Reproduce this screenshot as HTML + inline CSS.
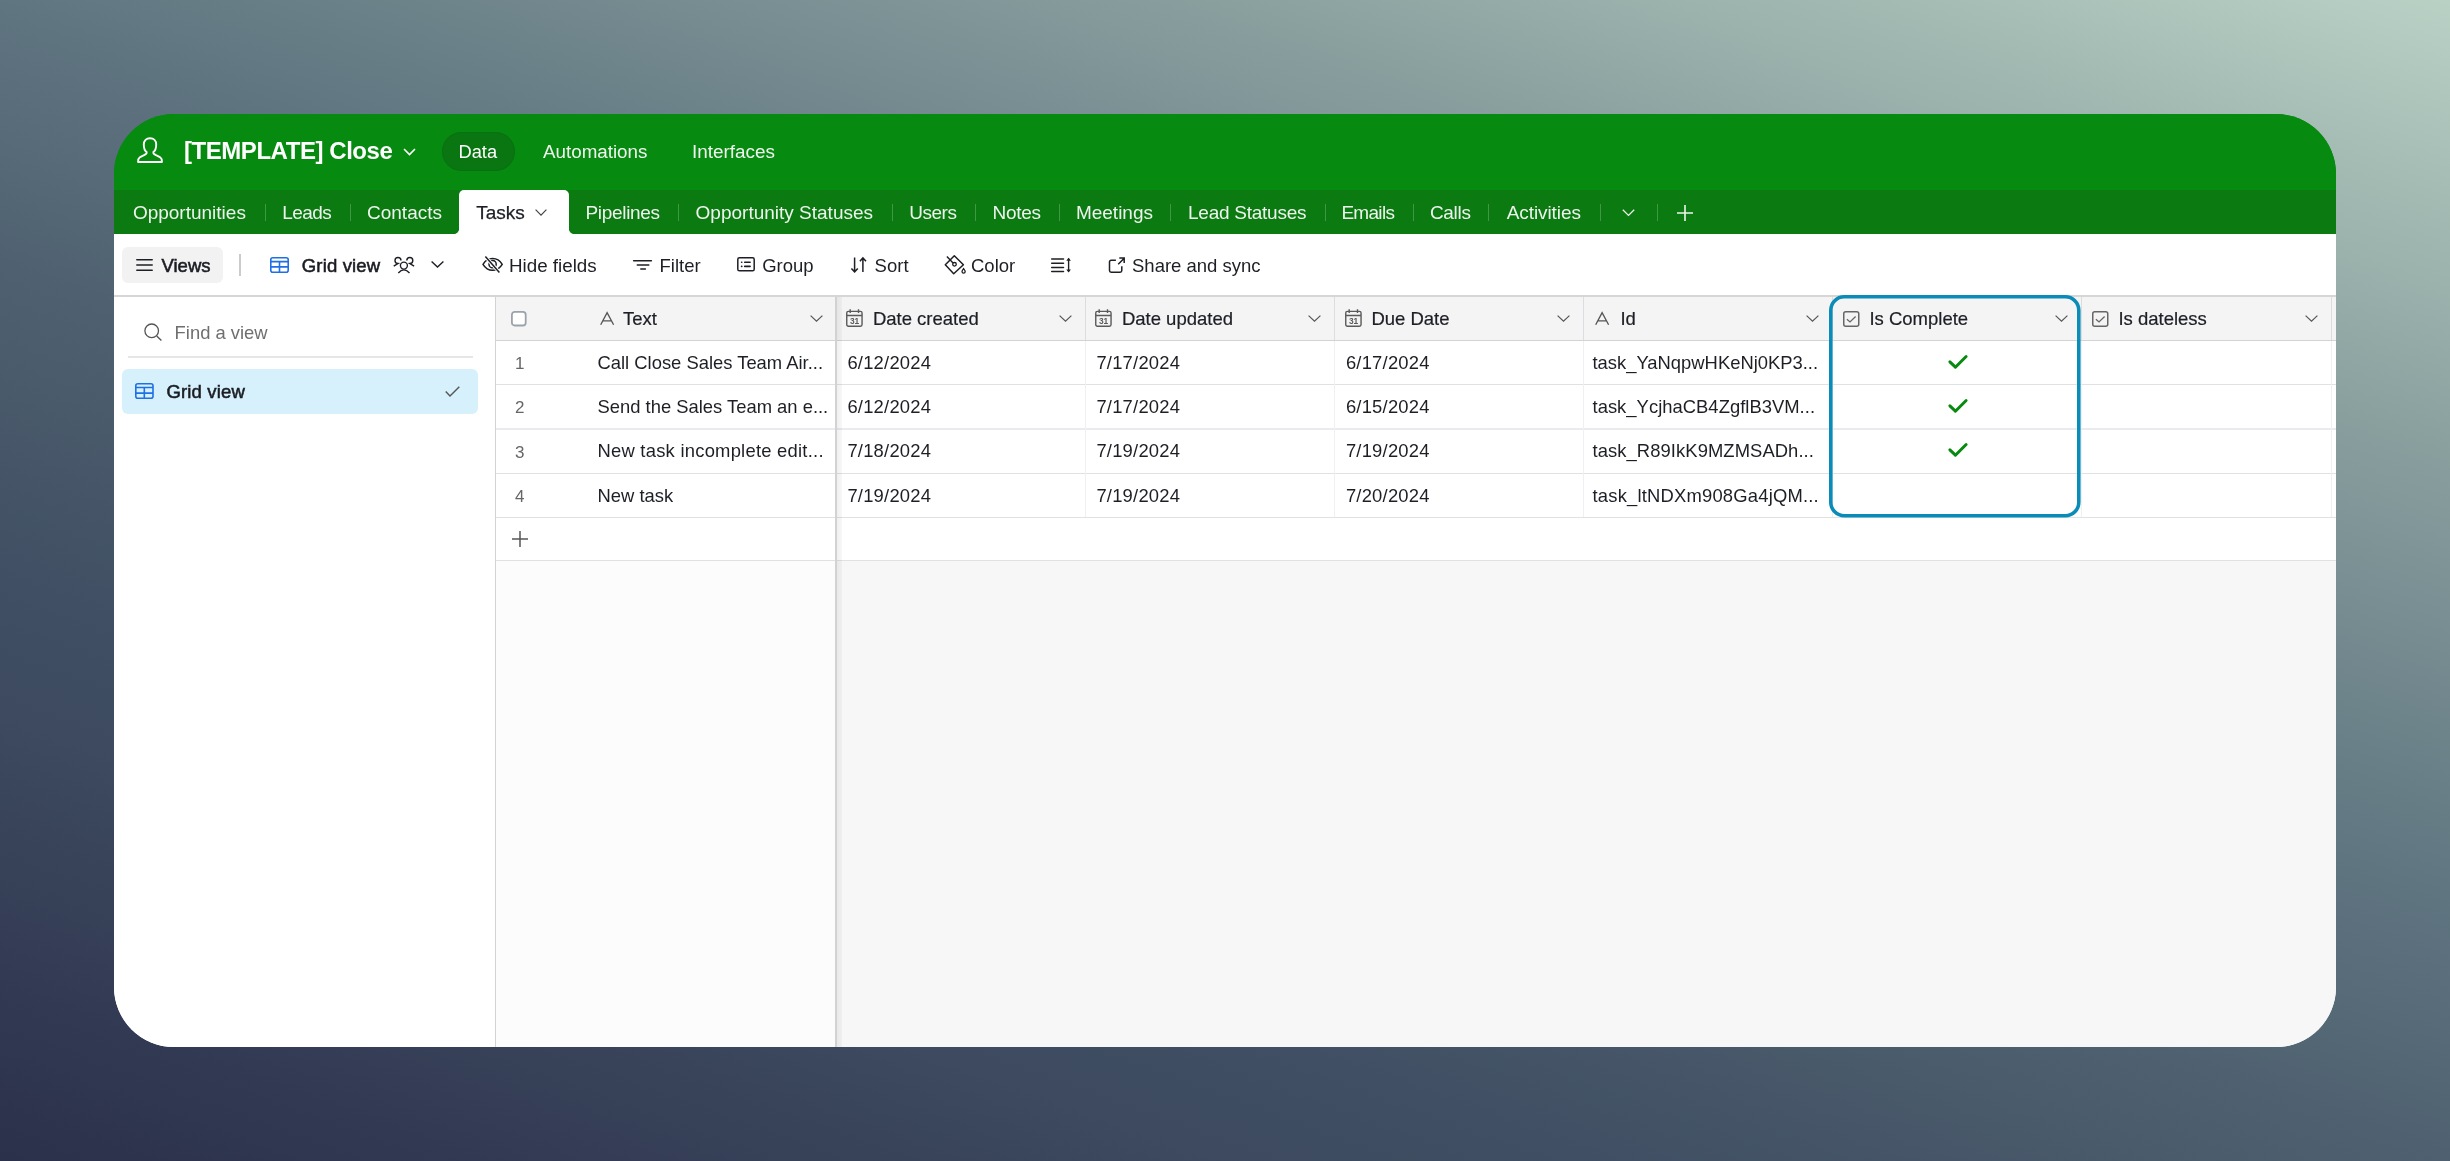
<!DOCTYPE html>
<html><head><meta charset="utf-8">
<style>
html,body{margin:0;padding:0;}
body{width:2450px;height:1161px;overflow:hidden;position:relative;font-family:"Liberation Sans",sans-serif;
background:linear-gradient(20deg,#2b304b 0%,#3d4a5f 21.8%,#404f63 28.4%,#4f6170 43.7%,#5f7580 56.3%,#7d9396 72%,#8aa09f 78.2%,#b9d1c5 100%);}
.abs{position:absolute;}
#win{will-change:transform;position:absolute;left:114px;top:114px;width:2222px;height:933px;border-radius:60px;overflow:hidden;background:linear-gradient(#078a10 0,#078a10 80px,#fff 80px);}
#hdr{position:absolute;left:0;top:0;width:2222px;height:76px;background:#078a10;}
#tabs{position:absolute;left:0;top:76px;width:2222px;height:44px;background:#0b7a11;}
#toolbar{position:absolute;left:0;top:120px;width:2222px;height:61px;background:#fff;border-bottom:2px solid #d6d6d6;}
.t{position:absolute;white-space:nowrap;line-height:1;}
svg{position:absolute;overflow:visible;}
.tab{font-size:19px;color:#eef4ee;}
.tbb{font-size:18.5px;font-weight:400;color:#1a1c22;-webkit-text-stroke:0.55px #1a1c22;}
.tbr{font-size:18.5px;color:#1d1f25;}
.hd{font-size:18.5px;color:#1d1f25;-webkit-text-stroke:0.2px #1d1f25;}
.cell{font-size:18.4px;color:#1d1f25;}
.rn{font-size:17px;color:#666;}
.sep{position:absolute;top:14px;width:1px;height:17px;background:rgba(255,255,255,0.22);}
</style></head>
<body>
<div id="win">
  <div id="hdr">
    <!-- person icon -->
    <svg style="left:23px;top:23px" width="26" height="27" viewBox="0 0 26 27"><path d="M9.6 15.1C7.3 13.4 6.8 10.6 6.8 7.5C6.8 3.6 9.4 1.3 13 1.3S19.2 3.6 19.2 7.5C19.2 10.6 18.7 13.4 16.4 15.1L16.5 16.3C17.2 17.6 21 19.1 23.4 20.5C24.6 21.3 25 22.4 24.9 25H1.1C1 22.4 1.4 21.3 2.6 20.5C5 19.1 8.8 17.6 9.5 16.3Z" fill="none" stroke="#fff" stroke-width="1.9" stroke-linejoin="round"/></svg>
    <div class="t" style="left:70px;top:25.3px;font-size:24px;font-weight:700;color:#fff;letter-spacing:-0.45px">[TEMPLATE] Close</div>
    <svg style="left:289px;top:34px" width="13" height="8" viewBox="0 0 13 8"><path d="M1 1l5.5 5.5L12 1" fill="none" stroke="#fff" stroke-width="1.6"/></svg>
    <div class="abs" style="left:328px;top:18px;width:73px;height:39px;border-radius:20px;background:#0a7612;box-shadow:inset 0 0 0 1px rgba(0,0,0,0.05)"></div>
    <div class="t" style="left:344.5px;top:29px;font-size:18.3px;color:#fff">Data</div>
    <div class="t" style="left:429px;top:29px;font-size:18.8px;color:#f0f5ef">Automations</div>
    <div class="t" style="left:578px;top:29px;font-size:18.9px;color:#f0f5ef">Interfaces</div>
  </div>
  <div id="tabs">
    <div class="t tab" style="left:18.9px;top:13.1px">Opportunities</div>
    <div class="t tab" style="left:168.3px;top:13.1px;letter-spacing:-0.55px">Leads</div>
    <div class="t tab" style="left:253.0px;top:13.1px">Contacts</div>
    <div class="t tab" style="left:471.4px;top:13.1px;letter-spacing:-0.3px">Pipelines</div>
    <div class="t tab" style="left:581.6px;top:13.1px">Opportunity Statuses</div>
    <div class="t tab" style="left:795.3px;top:13.1px;letter-spacing:-0.5px">Users</div>
    <div class="t tab" style="left:878.5px;top:13.1px;letter-spacing:-0.3px">Notes</div>
    <div class="t tab" style="left:961.9px;top:13.1px">Meetings</div>
    <div class="t tab" style="left:1074.0px;top:13.1px;letter-spacing:-0.25px">Lead Statuses</div>
    <div class="t tab" style="left:1227.4px;top:13.1px;letter-spacing:-0.7px">Emails</div>
    <div class="t tab" style="left:1315.9px;top:13.1px;letter-spacing:-0.3px">Calls</div>
    <div class="t tab" style="left:1392.7px;top:13.1px;letter-spacing:-0.08px">Activities</div>
    <div class="sep" style="left:150.9px"></div>
    <div class="sep" style="left:235.5px"></div>
    <div class="sep" style="left:564.0px"></div>
    <div class="sep" style="left:777.7px"></div>
    <div class="sep" style="left:860.5px"></div>
    <div class="sep" style="left:945.0px"></div>
    <div class="sep" style="left:1056.4px"></div>
    <div class="sep" style="left:1210.5px"></div>
    <div class="sep" style="left:1299.1px"></div>
    <div class="sep" style="left:1374.3px"></div>
    <div class="sep" style="left:1486.1px"></div>
    <div class="sep" style="left:1542.5px"></div>
    <svg style="left:1507.5px;top:19px" width="13" height="7" viewBox="0 0 13 7"><path d="M0.8 0.8l5.7 5.6 5.7-5.6" fill="none" stroke="#eef4ee" stroke-width="1.3"/></svg>
    <svg style="left:1563px;top:14.5px" width="16" height="16" viewBox="0 0 16 16"><path d="M8 0v16M0 8h16" fill="none" stroke="#eef4ee" stroke-width="1.6"/></svg>
    <div class="abs" style="left:340px;top:39px;width:5px;height:5px;background:radial-gradient(circle at 0 0,#0b7a11 4.6px,#fff 5.3px)"></div>
    <div class="abs" style="left:455px;top:39px;width:5px;height:5px;background:radial-gradient(circle at 100% 0,#0b7a11 4.6px,#fff 5.3px)"></div>
    <div class="abs" style="left:345px;top:0;width:110px;height:46px;background:#fff;border-radius:5px 5px 0 0"></div>
    <div class="t tab" style="left:362.3px;top:13.1px;color:#1d1f25;-webkit-text-stroke:0.25px #1d1f25">Tasks</div>
    <svg style="left:420.8px;top:19px" width="12" height="7" viewBox="0 0 12 7"><path d="M0.6 0.6l5.4 5.5 5.4-5.5" fill="none" stroke="#444" stroke-width="1.2"/></svg>
  </div>
  <div id="toolbar">
    <div class="abs" style="left:8px;top:13px;width:101px;height:36px;border-radius:6px;background:#f2f2f2"></div>
    <svg style="left:22px;top:25px" width="17" height="12" viewBox="0 0 17 12"><path d="M0.8 0.7h15.4M0.8 6h15.4M0.8 11.3h15.4" fill="none" stroke="#1d1f25" stroke-width="1.5" stroke-linecap="round"/></svg>
    <div class="t tbb" style="left:47.5px;top:22.9px">Views</div>
    <div class="abs" style="left:125px;top:20px;width:2px;height:22px;background:#cbcbcb"></div>
    <svg style="left:156px;top:22.7px" width="19" height="16" viewBox="0 0 19 16"><rect x="0.8" y="0.8" width="17.4" height="14.4" rx="2" fill="none" stroke="#1f6fe6" stroke-width="1.6"/><path d="M0.8 4.6h17.4M0.8 9.9h17.4M9.5 4.6v10.6" fill="none" stroke="#1f6fe6" stroke-width="1.6"/></svg>
    <div class="t tbb" style="left:187.8px;top:22.9px;letter-spacing:0.15px">Grid view</div>
    <svg style="left:279px;top:22px" width="22" height="18" viewBox="0 0 22 18"><circle cx="10.9" cy="9.6" r="3.5" fill="none" stroke="#1d1f25" stroke-width="1.4"/><path d="M5.3 16.9Q10.9 10.9 16.5 16.9" fill="none" stroke="#1d1f25" stroke-width="1.4"/><path d="M8 4.4A3 3 0 1 0 4.9 7.5L0.7 10.1" fill="none" stroke="#1d1f25" stroke-width="1.4"/><path d="M13.8 4.4A3 3 0 1 1 16.9 7.5L21.1 10.1" fill="none" stroke="#1d1f25" stroke-width="1.4"/></svg>
    <svg style="left:317px;top:27.3px" width="13" height="7" viewBox="0 0 13 7"><path d="M0.6 0.6l5.9 5.4 5.9-5.4" fill="none" stroke="#1d1f25" stroke-width="1.4"/></svg>
    <svg style="left:368px;top:22px" width="22" height="17" viewBox="0 0 22 17"><path d="M1 8.3C3.2 4.6 6.6 2.5 10.6 2.5S18 4.6 20.2 8.3C18 12 14.6 14.2 10.6 14.2S3.2 12 1 8.3z" fill="none" stroke="#1d1f25" stroke-width="1.5"/><circle cx="10.6" cy="8.2" r="3.6" fill="none" stroke="#1d1f25" stroke-width="1.5"/><path d="M3.4 0.6L17.4 16.4" stroke="#fff" stroke-width="3.5"/><path d="M3.4 0.6L17.4 16.4" stroke="#1d1f25" stroke-width="1.5"/></svg>
    <div class="t tbr" style="left:395px;top:22.9px;font-size:18.8px">Hide fields</div>
    <svg style="left:519px;top:25.5px" width="19" height="10" viewBox="0 0 19 10"><path d="M0.6 0.8h17.8M4.3 5h11.5M7.8 9.1h4.6" fill="none" stroke="#1d1f25" stroke-width="1.5" stroke-linecap="round"/></svg>
    <div class="t tbr" style="left:545.5px;top:22.9px">Filter</div>
    <svg style="left:622.5px;top:23px" width="18" height="15" viewBox="0 0 18 15"><rect x="0.8" y="0.8" width="16.4" height="13" rx="1.6" fill="none" stroke="#1d1f25" stroke-width="1.5"/><path d="M4.6 5.3h.2M4.6 9.4h.2M7.7 5.3h5.4M7.7 9.4h5.4" fill="none" stroke="#1d1f25" stroke-width="1.6" stroke-linecap="round"/></svg>
    <div class="t tbr" style="left:648.2px;top:22.9px">Group</div>
    <svg style="left:736px;top:23px" width="18" height="16" viewBox="0 0 18 16"><path d="M4.6 0.6v14.3M1.4 11.4l3.2 3.4 3.2-3.4M12.9 15V0.8M9.9 4.3l3-3.4 3.1 3.4" fill="none" stroke="#1d1f25" stroke-width="1.5"/></svg>
    <div class="t tbr" style="left:760.6px;top:22.9px">Sort</div>
    <svg style="left:829px;top:20.5px" width="24" height="21" viewBox="0 0 24 21"><path d="M11.3 0.7L20.4 9.8L10.7 18.8L2.3 9.8Z" fill="none" stroke="#1d1f25" stroke-width="1.5" stroke-linejoin="round"/><path d="M3.9 1.5L10.3 8.2" fill="none" stroke="#1d1f25" stroke-width="1.4"/><circle cx="11.5" cy="9.3" r="1.8" fill="#fff" stroke="#1d1f25" stroke-width="1.3"/><path d="M20.6 13.6c.8 1 1.6 2 1.6 2.9a1.6 1.6 0 0 1-3.2 0c0-.9.8-1.9 1.6-2.9z" fill="none" stroke="#1d1f25" stroke-width="1.3"/></svg>
    <div class="t tbr" style="left:857px;top:22.9px">Color</div>
    <svg style="left:937px;top:22.5px" width="21" height="16" viewBox="0 0 21 16"><path d="M0.7 2.1h11.8M0.7 6.2h11.8M0.7 10.4h11.8M0.7 14.6h11.8" fill="none" stroke="#1d1f25" stroke-width="1.5" stroke-linecap="round"/><path d="M17.6 1.5v13" fill="none" stroke="#1d1f25" stroke-width="1.4"/><path d="M15.3 3.8l2.3-3 2.3 3zM15.3 12.4l2.3 3 2.3-3z" fill="#1d1f25"/></svg>
    <svg style="left:993.5px;top:22.5px" width="18" height="16" viewBox="0 0 18 16"><path d="M7.9 3.2H3.2c-1 0-1.7.7-1.7 1.7v8.7c0 1 .7 1.7 1.7 1.7h8.9c1 0 1.7-.7 1.7-1.7V9.2" fill="none" stroke="#1d1f25" stroke-width="1.5"/><path d="M10.2 7.3l6-6.1M11.3 1.1h4.9V6" fill="none" stroke="#1d1f25" stroke-width="1.5"/></svg>
    <div class="t tbr" style="left:1018px;top:22.9px">Share and sync</div>
  </div>
<!--GRID-->
<div id="sidebar" class="abs" style="left:0;top:183px;width:381px;height:750px;background:#fff;border-right:1px solid #d3d3d3"></div>
<svg style="left:29.8px;top:209.0px" width="19" height="19" viewBox="0 0 19 19"><circle cx="7.7" cy="7.8" r="6.8" fill="none" stroke="#555" stroke-width="1.3"/><path d="M12.7 12.9l4.7 4.6" stroke="#555" stroke-width="1.35"/></svg>
<div class="t" style="left:60.6px;top:209.62px;font-size:18.4px;color:#6f6f6f">Find a view</div>
<div class="abs" style="left:14px;top:242px;width:345px;height:2px;background:#e6e6e6"></div>
<div class="abs" style="left:8.3px;top:255px;width:355.5px;height:44.5px;border-radius:6px;background:#d6f0fc"></div>
<svg style="left:21.2px;top:268.7px" width="19" height="16" viewBox="0 0 19 16"><rect x="0.8" y="0.8" width="17.2" height="14.4" rx="2" fill="none" stroke="#1f6fe6" stroke-width="1.6"/><path d="M0.8 4.5h17.2M0.8 10.1h17.2M9.3 4.5v10.7" fill="none" stroke="#1f6fe6" stroke-width="1.6"/></svg>
<div class="t tbb" style="left:52.5px;top:268.64px;letter-spacing:0.15px">Grid view</div>
<svg style="left:330.6px;top:271.8px" width="15" height="11" viewBox="0 0 15 11"><path d="M0.7 5.6l4.3 4.3L14.3 0.7" fill="none" stroke="#555" stroke-width="1.4"/></svg>
<div class="abs" style="left:382px;top:183px;width:1840px;height:43px;background:#f4f4f4"></div>
<div class="abs" style="left:382px;top:447px;width:340px;height:486px;background:#fcfcfc"></div>
<div class="abs" style="left:722px;top:447px;width:1500px;height:486px;background:#f7f7f7"></div>
<div class="abs" style="left:382px;top:226px;width:1840px;height:1px;background:#d3d3d3"></div>
<div class="abs" style="left:382px;top:270px;width:1840px;height:1px;background:#dfe2e5"></div>
<div class="abs" style="left:382px;top:314px;width:1840px;height:2px;background:#e9ebee"></div>
<div class="abs" style="left:382px;top:359px;width:1840px;height:1px;background:#dfe2e5"></div>
<div class="abs" style="left:382px;top:403px;width:1840px;height:1px;background:#dfe2e5"></div>
<div class="abs" style="left:382px;top:446px;width:1840px;height:1px;background:#dfe2e5"></div>
<div class="abs" style="left:970.5px;top:183px;width:1px;height:43px;background:#dcdde0"></div>
<div class="abs" style="left:970.5px;top:227px;width:1px;height:176px;background:#eef0f2"></div>
<div class="abs" style="left:1220.0px;top:183px;width:1px;height:43px;background:#dcdde0"></div>
<div class="abs" style="left:1220.0px;top:227px;width:1px;height:176px;background:#eef0f2"></div>
<div class="abs" style="left:1469.0px;top:183px;width:1px;height:43px;background:#dcdde0"></div>
<div class="abs" style="left:1469.0px;top:227px;width:1px;height:176px;background:#eef0f2"></div>
<div class="abs" style="left:1718.0px;top:183px;width:1px;height:43px;background:#dcdde0"></div>
<div class="abs" style="left:1718.0px;top:227px;width:1px;height:176px;background:#eef0f2"></div>
<div class="abs" style="left:1967.0px;top:183px;width:1px;height:43px;background:#dcdde0"></div>
<div class="abs" style="left:1967.0px;top:227px;width:1px;height:176px;background:#eef0f2"></div>
<div class="abs" style="left:2216.5px;top:183px;width:1px;height:43px;background:#dcdde0"></div>
<div class="abs" style="left:2216.5px;top:227px;width:1px;height:176px;background:#eef0f2"></div>
<div class="abs" style="left:721px;top:183px;width:2px;height:750px;background:#d2d2d2"></div>
<div class="abs" style="left:723px;top:183px;width:5px;height:750px;background:linear-gradient(90deg,rgba(0,0,0,0.06),rgba(0,0,0,0.03))"></div>
<svg style="left:397.1px;top:196.5px" width="16" height="16" viewBox="0 0 16 16"><rect x="0.9" y="0.9" width="13.8" height="13.6" rx="2.8" fill="#fff" stroke="#9aa3ab" stroke-width="1.8"/></svg>
<svg style="left:485.8px;top:198.0px" width="15" height="13" viewBox="0 0 15 13"><path d="M0.7 12.7L7.1 0.6l6.5 12.1M2.8 8.8h8.6" fill="none" stroke="#555" stroke-width="1.35"/></svg>
<div class="t hd" style="left:509.0px;top:196.14px">Text</div>
<svg style="left:695.5px;top:201.0px" width="13" height="7" viewBox="0 0 13 7"><path d="M0.6 0.6l5.9 5.5 5.9-5.5" fill="none" stroke="#555" stroke-width="1.2"/></svg>
<svg style="left:732.3px;top:195.0px" width="17" height="18" viewBox="0 0 17 18"><rect x="0.75" y="2.4" width="15.3" height="14.8" rx="1.6" fill="none" stroke="#5a5a5a" stroke-width="1.4"/><path d="M0.75 6.5h15.3M4.2 0.2v3.8M12.5 0.2v3.8" fill="none" stroke="#5a5a5a" stroke-width="1.4"/><text x="8.4" y="15.3" text-anchor="middle" font-family="Liberation Sans" font-size="8.4" font-weight="700" fill="#5a5a5a" letter-spacing="-0.3">31</text></svg>
<div class="t hd" style="left:758.9px;top:196.14px">Date created</div>
<svg style="left:944.7px;top:201.0px" width="13" height="7" viewBox="0 0 13 7"><path d="M0.6 0.6l5.9 5.5 5.9-5.5" fill="none" stroke="#555" stroke-width="1.2"/></svg>
<svg style="left:981.3px;top:195.0px" width="17" height="18" viewBox="0 0 17 18"><rect x="0.75" y="2.4" width="15.3" height="14.8" rx="1.6" fill="none" stroke="#5a5a5a" stroke-width="1.4"/><path d="M0.75 6.5h15.3M4.2 0.2v3.8M12.5 0.2v3.8" fill="none" stroke="#5a5a5a" stroke-width="1.4"/><text x="8.4" y="15.3" text-anchor="middle" font-family="Liberation Sans" font-size="8.4" font-weight="700" fill="#5a5a5a" letter-spacing="-0.3">31</text></svg>
<div class="t hd" style="left:1007.9px;top:196.14px">Date updated</div>
<svg style="left:1194.2px;top:201.0px" width="13" height="7" viewBox="0 0 13 7"><path d="M0.6 0.6l5.9 5.5 5.9-5.5" fill="none" stroke="#555" stroke-width="1.2"/></svg>
<svg style="left:1230.8px;top:195.0px" width="17" height="18" viewBox="0 0 17 18"><rect x="0.75" y="2.4" width="15.3" height="14.8" rx="1.6" fill="none" stroke="#5a5a5a" stroke-width="1.4"/><path d="M0.75 6.5h15.3M4.2 0.2v3.8M12.5 0.2v3.8" fill="none" stroke="#5a5a5a" stroke-width="1.4"/><text x="8.4" y="15.3" text-anchor="middle" font-family="Liberation Sans" font-size="8.4" font-weight="700" fill="#5a5a5a" letter-spacing="-0.3">31</text></svg>
<div class="t hd" style="left:1257.4px;top:196.14px">Due Date</div>
<svg style="left:1443.2px;top:201.0px" width="13" height="7" viewBox="0 0 13 7"><path d="M0.6 0.6l5.9 5.5 5.9-5.5" fill="none" stroke="#555" stroke-width="1.2"/></svg>
<svg style="left:1481.0px;top:198.0px" width="15" height="13" viewBox="0 0 15 13"><path d="M0.7 12.7L7.1 0.6l6.5 12.1M2.8 8.8h8.6" fill="none" stroke="#555" stroke-width="1.35"/></svg>
<div class="t hd" style="left:1506.4px;top:196.14px">Id</div>
<svg style="left:1692.2px;top:201.0px" width="13" height="7" viewBox="0 0 13 7"><path d="M0.6 0.6l5.9 5.5 5.9-5.5" fill="none" stroke="#555" stroke-width="1.2"/></svg>
<svg style="left:1729.2px;top:196.7px" width="17" height="16" viewBox="0 0 17 16"><rect x="0.75" y="0.75" width="15" height="14.5" rx="2" fill="none" stroke="#666" stroke-width="1.5"/><path d="M3.9 8.3l3.1 2.6 5.6-5.4" fill="none" stroke="#666" stroke-width="1.3"/></svg>
<div class="t hd" style="left:1755.4px;top:196.14px">Is Complete</div>
<svg style="left:1941.2px;top:201.0px" width="13" height="7" viewBox="0 0 13 7"><path d="M0.6 0.6l5.9 5.5 5.9-5.5" fill="none" stroke="#555" stroke-width="1.2"/></svg>
<svg style="left:1978.2px;top:196.7px" width="17" height="16" viewBox="0 0 17 16"><rect x="0.75" y="0.75" width="15" height="14.5" rx="2" fill="none" stroke="#666" stroke-width="1.5"/><path d="M3.9 8.3l3.1 2.6 5.6-5.4" fill="none" stroke="#666" stroke-width="1.3"/></svg>
<div class="t hd" style="left:2004.4px;top:196.14px">Is dateless</div>
<svg style="left:2190.7px;top:201.0px" width="13" height="7" viewBox="0 0 13 7"><path d="M0.6 0.6l5.9 5.5 5.9-5.5" fill="none" stroke="#555" stroke-width="1.2"/></svg>
<div class="t rn" style="left:385.8px;width:40px;text-align:center;top:240.81px">1</div>
<div class="t cell" style="left:483.5px;top:239.62px;letter-spacing:0px">Call Close Sales Team Air...</div>
<div class="t cell" style="left:733.4px;top:239.62px;letter-spacing:0.22px;">6/12/2024</div>
<div class="t cell" style="left:982.4px;top:239.62px;letter-spacing:0.22px;">7/17/2024</div>
<div class="t cell" style="left:1231.9px;top:239.62px;letter-spacing:0.22px;">6/17/2024</div>
<div class="t cell" style="left:1478.5px;top:239.62px;letter-spacing:0px;">task_YaNqpwHKeNj0KP3...</div>
<svg style="left:1833.5px;top:241.1px" width="20" height="15" viewBox="0 0 20 15"><path d="M1.9 6.9L7.4 12.2L18.1 1.5" fill="none" stroke="#078a0e" stroke-width="3" stroke-linecap="round" stroke-linejoin="round"/></svg>
<div class="t rn" style="left:385.8px;width:40px;text-align:center;top:285.01px">2</div>
<div class="t cell" style="left:483.5px;top:283.82px;letter-spacing:0px">Send the Sales Team an e...</div>
<div class="t cell" style="left:733.4px;top:283.82px;letter-spacing:0.22px;">6/12/2024</div>
<div class="t cell" style="left:982.4px;top:283.82px;letter-spacing:0.22px;">7/17/2024</div>
<div class="t cell" style="left:1231.9px;top:283.82px;letter-spacing:0.22px;">6/15/2024</div>
<div class="t cell" style="left:1478.5px;top:283.82px;letter-spacing:0.03px;">task_YcjhaCB4ZgflB3VM...</div>
<svg style="left:1833.5px;top:285.0px" width="20" height="15" viewBox="0 0 20 15"><path d="M1.9 6.9L7.4 12.2L18.1 1.5" fill="none" stroke="#078a0e" stroke-width="3" stroke-linecap="round" stroke-linejoin="round"/></svg>
<div class="t rn" style="left:385.8px;width:40px;text-align:center;top:329.61px">3</div>
<div class="t cell" style="left:483.5px;top:328.42px;letter-spacing:0.24px">New task incomplete edit...</div>
<div class="t cell" style="left:733.4px;top:328.42px;letter-spacing:0.22px;">7/18/2024</div>
<div class="t cell" style="left:982.4px;top:328.42px;letter-spacing:0.22px;">7/19/2024</div>
<div class="t cell" style="left:1231.9px;top:328.42px;letter-spacing:0.22px;">7/19/2024</div>
<div class="t cell" style="left:1478.5px;top:328.42px;letter-spacing:0.08px;">task_R89IkK9MZMSADh...</div>
<svg style="left:1833.5px;top:329.0px" width="20" height="15" viewBox="0 0 20 15"><path d="M1.9 6.9L7.4 12.2L18.1 1.5" fill="none" stroke="#078a0e" stroke-width="3" stroke-linecap="round" stroke-linejoin="round"/></svg>
<div class="t rn" style="left:385.8px;width:40px;text-align:center;top:373.91px">4</div>
<div class="t cell" style="left:483.5px;top:372.72px;letter-spacing:0px">New task</div>
<div class="t cell" style="left:733.4px;top:372.72px;letter-spacing:0.22px;">7/19/2024</div>
<div class="t cell" style="left:982.4px;top:372.72px;letter-spacing:0.22px;">7/19/2024</div>
<div class="t cell" style="left:1231.9px;top:372.72px;letter-spacing:0.22px;">7/20/2024</div>
<div class="t cell" style="left:1478.5px;top:372.72px;letter-spacing:0.2px;">task_ltNDXm908Ga4jQM...</div>
<svg style="left:398.3px;top:417.1px" width="16" height="16" viewBox="0 0 16 16"><path d="M8 0v16M0 8h16" fill="none" stroke="#555" stroke-width="1.5"/></svg>
<svg style="left:1715.3px;top:181.2px" width="252" height="223" viewBox="0 0 252 223"><rect x="1.8" y="1.8" width="248" height="219" rx="13.5" fill="none" stroke="#0b8bb8" stroke-width="3.6"/></svg>
<!--/GRID-->
</div>
</body></html>
